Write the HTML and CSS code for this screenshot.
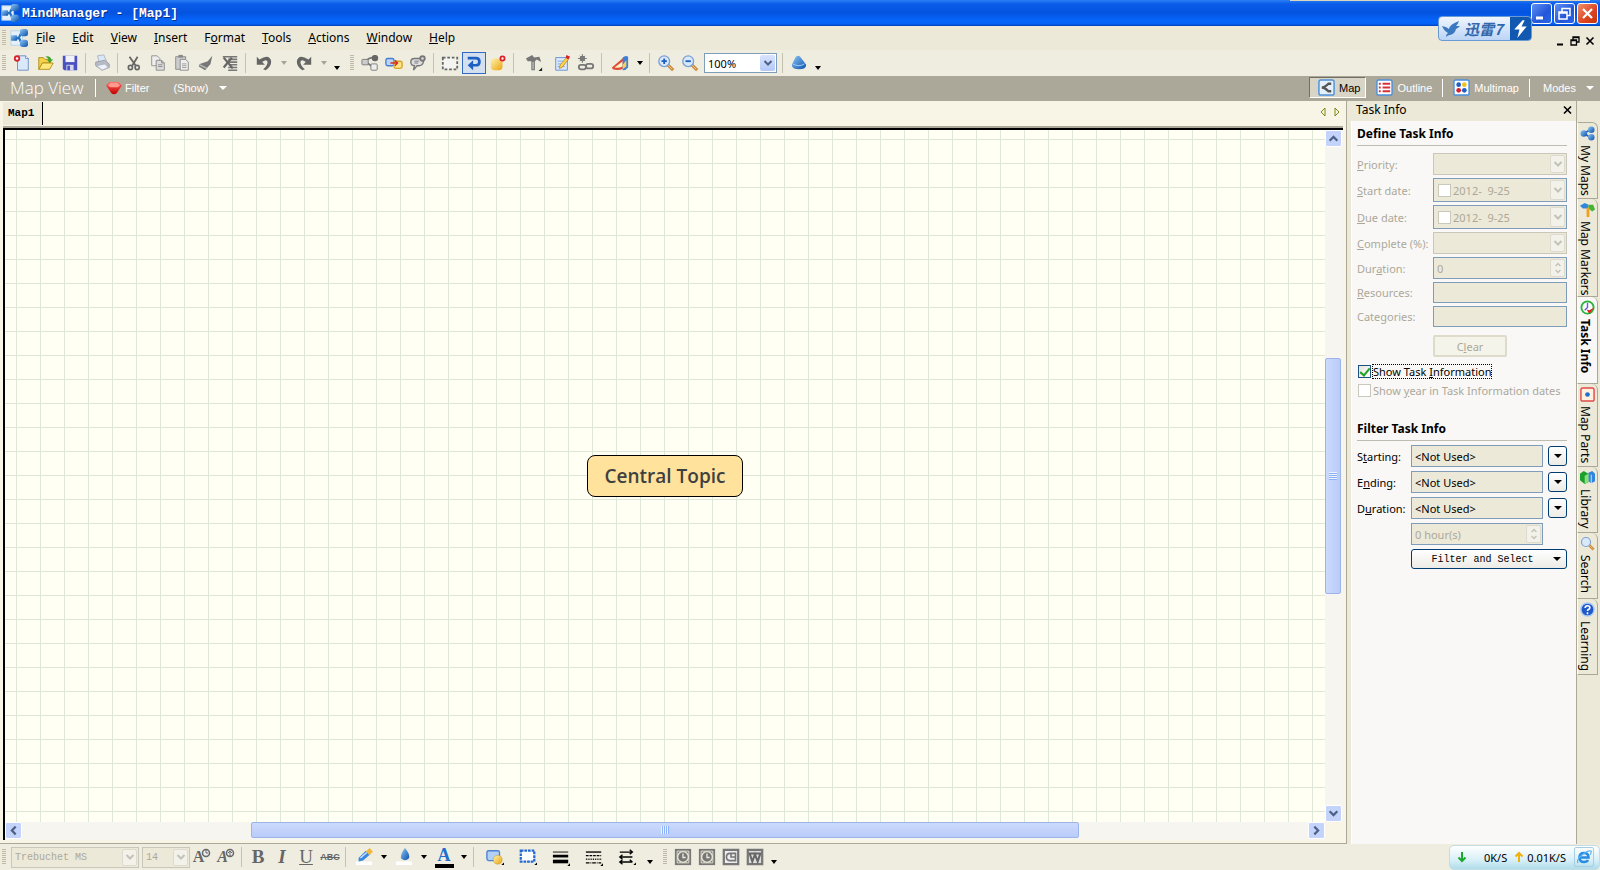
FILE: index.html
```html
<!DOCTYPE html>
<html lang="en">
<head>
  <meta charset="UTF-8">
  <meta name="viewport" content="width=device-width, initial-scale=1.0">
  <title>MindManager - [Map1]</title>
  <link rel="stylesheet" href="styles.css">
</head>
<body>
  <svg width="0" height="0" class="defs" aria-hidden="true">
    <defs>
      <linearGradient id="blue" x1="0" y1="0" x2="1" y2="1"><stop offset="0" stop-color="#8cc8f4"/><stop offset="1" stop-color="#0c4fae"/></linearGradient>
      <linearGradient id="gold" x1="0" y1="0" x2="1" y2="1"><stop offset="0" stop-color="#fff3b0"/><stop offset="1" stop-color="#e8a40c"/></linearGradient>
      <linearGradient id="ruby" x1="0" y1="0" x2="0" y2="1"><stop offset="0" stop-color="#ff6a60"/><stop offset="1" stop-color="#c40000"/></linearGradient>
    </defs>
    <symbol id="logo" viewBox="0 0 20 20">
      <rect x="1" y="2" width="13" height="16" fill="#e4f1fb" stroke="#b4d3ea"/>
      <path d="M5 10h4c2 0 2-6 5-6M9 10c3 0 2 6 5 6" fill="none" stroke="#2471c0" stroke-width="2.500"/>
      <rect x="1" y="7" width="7" height="6" rx="1" fill="url(#blue)"/>
      <rect x="11" y="0" width="9" height="8" rx="3" fill="url(#blue)"/>
      <rect x="11" y="12" width="9" height="8" rx="3" fill="url(#blue)"/>
    </symbol>
    <symbol id="chev" viewBox="0 0 10 10"><path d="M1.500 3 5 6.500 8.500 3" fill="none" stroke="currentColor" stroke-width="2"/></symbol>
    <symbol id="clock" viewBox="0 0 20 20">
      <rect x="1" y="1" width="18" height="18" fill="#777"/><path d="M3.500 3.500h13v13h-13z" fill="none" stroke="#ece9d8"/>
      <circle cx="10" cy="10" r="6" fill="#777" stroke="#ece9d8" stroke-width="1.500"/><path d="M10 6v4.500h3" fill="none" stroke="#ece9d8" stroke-width="1.500"/>
    </symbol>
    <symbol id="glass" viewBox="0 0 20 20">
      <path d="M12 12l6 6" stroke="#c98a3a" stroke-width="3.500"/><path d="M12 12l5 5" stroke="#f3c98a" stroke-width="1"/>
      <circle cx="8" cy="8" r="6" fill="#d8e9fb" stroke="#7d9fd0" stroke-width="1.500"/>
    </symbol>
  </svg>

  <header class="titlebar">
    <svg class="icon"><use href="#logo"/></svg>
    <h1>MindManager - [Map1]</h1>
    <div class="window-buttons">
      <button aria-label="Minimize"><svg viewBox="0 0 19 19"><path d="M4 14h7" stroke="#fff" stroke-width="3"/></svg></button>
      <button aria-label="Restore"><svg viewBox="0 0 19 19"><path d="M7 8V4.500h8v7h-3M7 4.500h8" fill="none" stroke="#fff" stroke-width="1.500"/><path d="M4 8h8v7H4zM4 9h8" fill="none" stroke="#fff" stroke-width="1.500"/></svg></button>
      <button class="close" aria-label="Close"><svg viewBox="0 0 19 19"><path d="M5 5l9 9M14 5l-9 9" stroke="#fff" stroke-width="2.200"/></svg></button>
    </div>
    <div class="badge">
      <svg viewBox="0 0 20 20" class="bird"><path d="M1 7q5 1 7 3 1-5 10-8-1 3-3 5 2 0 4 0-2 2-4 3-1 5-6 6-2 0-4 2 0-3 2-4-4-2-6-7z" fill="#3b79bf"/></svg>
      <span>迅雷7</span>
      <svg viewBox="0 0 20 24" class="bolt"><path d="M12 4 4 13h5l-2 8 9-11h-5l3-6z" fill="#fff"/></svg>
    </div>
  </header>

  <nav class="menubar">
    <span class="grip"></span>
    <svg class="icon"><use href="#logo"/></svg>
    <a href="#file"><u>F</u>ile</a>
    <a href="#edit"><u>E</u>dit</a>
    <a href="#view"><u>V</u>iew</a>
    <a href="#insert"><u>I</u>nsert</a>
    <a href="#format">F<u>o</u>rmat</a>
    <a href="#tools"><u>T</u>ools</a>
    <a href="#actions"><u>A</u>ctions</a>
    <a href="#window"><u>W</u>indow</a>
    <a href="#help"><u>H</u>elp</a>
    <div class="doc-buttons">
      <button aria-label="Minimize map"><svg viewBox="0 0 12 12"><path d="M3 9.500h6" stroke="#000" stroke-width="2"/></svg></button>
      <button aria-label="Restore map"><svg viewBox="0 0 12 12"><path d="M4 5V2h6v5H8M4 2.500h6M2 5h5.500v5H2zM2 5.500h6" fill="none" stroke="#000" stroke-width="1.300"/></svg></button>
      <button aria-label="Close map"><svg viewBox="0 0 12 12"><path d="M2.500 2.500l7 7M9.500 2.500l-7 7" stroke="#000" stroke-width="1.600"/></svg></button>
    </div>
  </nav>

  <div class="toolbar">
    <span class="grip"></span>
    <button class="tool" aria-label="New"><svg viewBox="0 0 20 20"><path d="M5 2h9l3 3v13H5z" fill="#d9e8fb" stroke="#6a8cc4"/><path d="M14 2v3h3" fill="#fff" stroke="#6a8cc4"/><circle cx="4.500" cy="5" r="2.500" fill="#fff" stroke="#d8202a" stroke-width="2"/></svg></button>
    <button class="tool" aria-label="Open"><svg viewBox="0 0 20 20"><path d="M2 4h5l2 2h6v4H6l-4 7z" fill="#f3d24a" stroke="#b08a14"/><path d="M6 10h12l-4 7H2z" fill="#ffe97a" stroke="#b08a14"/><path d="M9 3q5-2 7 3h2l-4 4-3-4h2q-1-2-4-3z" fill="#3fa52c"/></svg></button>
    <button class="tool" aria-label="Save"><svg viewBox="0 0 20 20"><path d="M2 2h16v16H3.500L2 16.500z" fill="#4a52c0"/><path d="M5 2h10v7H5z" fill="#f0f2fb"/><path d="M6 12h8v6H6z" fill="#d3d8f0"/><path d="M7 13h3v5H7z" fill="#4a52c0"/></svg></button>
    <span class="sep"></span>
    <button class="tool" aria-label="Print"><svg viewBox="0 0 20 20"><path d="M5 2l7-1 3 7-8 2z" fill="#d9e7f8" stroke="#a9b4c6"/><path d="M3 9l10-2 5 4v4l-8 3-7-5z" fill="#b8bac4" stroke="#9a9ca6"/><path d="M4 13l9-2 4 4-7 3z" fill="#eef2f8" stroke="#a9b4c6"/></svg></button>
    <span class="sep"></span>
    <button class="tool" aria-label="Cut"><svg viewBox="0 0 20 20"><path d="M5 3l7 10M14 3L8 13" stroke="#666" stroke-width="2"/><circle cx="6" cy="15" r="2.300" fill="none" stroke="#666" stroke-width="1.800"/><circle cx="13.500" cy="15" r="2.300" fill="none" stroke="#666" stroke-width="1.800"/></svg></button>
    <button class="tool" aria-label="Copy"><svg viewBox="0 0 20 20"><path d="M3 2h6l3 3v8H3z" fill="#eee" stroke="#909090"/><path d="M8 7h6l3 3v8H8z" fill="#ddd" stroke="#888"/><path d="M14 7v3h3M10 12h5M10 14h5" fill="none" stroke="#888"/></svg></button>
    <button class="tool" aria-label="Paste"><svg viewBox="0 0 20 20"><path d="M3 3h11v14H3z" fill="#ccc" stroke="#888"/><path d="M6 1h5v3H6z" fill="#888"/><path d="M8 6h6l3 3v9H8z" fill="#eee" stroke="#888"/><path d="M10 11h5M10 13h5M10 15h5" stroke="#999"/></svg></button>
    <button class="tool" aria-label="Format painter"><svg viewBox="0 0 20 20"><path d="M17 2l-5 6-9 3-1 3 7 4 6-7 2-9z" fill="#777"/><path d="M3 12l8 4" stroke="#bbb" stroke-width="1.500"/></svg></button>
    <button class="tool" aria-label="Clear format"><svg viewBox="0 0 20 20"><path d="M2 3h16M8 6h10M8 9h10M9 12h9M8 15h10M8 18h10" stroke="#777" stroke-width="1.800"/><path d="M3 4l10 12M12 4L3 15" stroke="#666" stroke-width="2.500"/></svg></button>
    <span class="sep"></span>
    <button class="tool wide" aria-label="Undo"><svg viewBox="0 0 20 20"><path d="M2 3v9h9L8 9q5-4 6 0 0 4-5 8l3 1q6-4 6-10Q16-1 5 6z" fill="#666"/></svg></button>
    <button class="drop grey" aria-label="Undo list"><i></i></button>
    <button class="tool wide" aria-label="Redo"><svg viewBox="0 0 20 20"><path d="M18 3v9h-9l3-3Q7 5 6 9q0 4 5 8l-3 1Q2 14 2 8 4-1 15 6z" fill="#666"/></svg></button>
    <button class="drop grey" aria-label="Redo list"><i></i></button>
    <button class="drop low" aria-label="Toolbar options"><i></i></button>
    <span class="grip second"></span>
    <button class="tool" aria-label="Insert topic"><svg viewBox="0 0 20 20"><path d="M6 8q2-4 8-4M7 10l7 5" fill="none" stroke="#777" stroke-width="2"/><rect x="1" y="6" width="7" height="6" rx="1" fill="#ccc" stroke="#777"/><rect x="12" y="1" width="7" height="7" rx="3" fill="#666"/><rect x="11" y="11" width="7" height="7" rx="1" fill="#eee" stroke="#777"/></svg></button>
    <button class="tool" aria-label="Insert relationship"><svg viewBox="0 0 20 20"><rect x="1" y="5" width="9" height="8" rx="2" fill="#b8d6fa" stroke="#4a7cd0" stroke-width="1.500"/><rect x="10" y="8" width="9" height="8" rx="2" fill="#ffe48a" stroke="#d8a424" stroke-width="1.500"/><path d="M6 10h8M11 7l3 3-3 3" fill="none" stroke="#d82c20" stroke-width="1.500"/></svg></button>
    <button class="tool" aria-label="Insert callout"><svg viewBox="0 0 20 20"><path d="M2 9q0-4 4-4h6q5 0 4 4-1 4-5 4H9l-4 5 1-5q-4 0-4-4z" fill="#ddd" stroke="#777" stroke-width="1.500"/><circle cx="15" cy="5" r="2.500" fill="#ddd" stroke="#777" stroke-width="2"/><path d="M6 8h5M6 10h4" stroke="#777"/></svg></button>
    <span class="sep"></span>
    <button class="tool" aria-label="Boundary"><svg viewBox="0 0 20 20"><path d="M2 4h16v13H2z" fill="#f4f4f0" stroke="#666" stroke-width="2" stroke-dasharray="3 2"/></svg></button>
    <button class="tool active" aria-label="Structure"><svg viewBox="0 0 20 20"><path d="M3 4.500h9q4 0 4 4t-4 4H8" fill="none" stroke="#1e5fc4" stroke-width="3"/><path d="M9 7v11l-6-5.500z" fill="#1e5fc4"/></svg></button>
    <button class="tool" aria-label="Add marker"><svg viewBox="0 0 20 20"><rect x="2" y="5" width="13" height="13" rx="4" fill="url(#gold)"/><circle cx="15" cy="5" r="2.300" fill="#fff" stroke="#d8202a" stroke-width="2"/></svg></button>
    <span class="sep"></span>
    <button class="tool wider" aria-label="Markers"><svg viewBox="0 0 20 20"><path d="M1 5l7-4 2 3 6-1 2 6-5-3-2 2v10H7V8L3 8z" fill="#777"/><path d="M8 9h2v8H8z" fill="#aaa"/><path d="M19 15v4h-4z" fill="#222"/></svg></button>
    <button class="tool" aria-label="Notes"><svg viewBox="0 0 20 20"><path d="M3 4h13v14H3z" fill="#dce9fb" stroke="#5b8fd8"/><path d="M5 8h8M5 11h6M5 14h8" stroke="#7ba6e0"/><path d="M15 4l2 2-7 9-3 1 1-4z" fill="#ffd24a" stroke="#a77718" stroke-width=".700"/><path d="M15 1l4 2-2 3-3-2z" fill="#d8202a"/></svg></button>
    <button class="tool" aria-label="Hyperlink"><svg viewBox="0 0 20 20"><circle cx="6" cy="5" r="2" fill="none" stroke="#777" stroke-width="2"/><path d="M6 0v10M1 5h10M3 2l6 6M9 2L3 8" stroke="#777"/><rect x="2" y="12" width="8" height="5" rx="2.500" fill="none" stroke="#777" stroke-width="2"/><rect x="10" y="11" width="8" height="5" rx="2.500" fill="none" stroke="#777" stroke-width="2"/></svg></button>
    <span class="sep"></span>
    <button class="tool wide" aria-label="Review"><svg viewBox="0 0 20 20"><path d="M1 15 14 4v12q-6 3-12 1z" fill="#e04a36"/><path d="M4 15l9-7v6q-5 2-9 1z" fill="#fff4c4"/><path d="M13 4q3-3 6-1v12q-2 3-6 3z" fill="#3f7fd4"/><path d="M13 12l4-5v7l-4 3z" fill="#f5cf5a"/></svg></button>
    <button class="drop" aria-label="Review options"><i></i></button>
    <span class="sep"></span>
    <button class="tool" aria-label="Zoom in"><svg viewBox="0 0 20 20"><use href="#glass"/><path d="M5 8h6M8 5v6" stroke="#1e5fc4" stroke-width="2"/></svg></button>
    <button class="tool" aria-label="Zoom out"><svg viewBox="0 0 20 20"><use href="#glass"/><path d="M5 8h6" stroke="#1e5fc4" stroke-width="2"/></svg></button>
    <span class="combo zoom">
      <select aria-label="Zoom level"><option>100%</option></select>
      <span class="arrow"><svg><use href="#chev"/></svg></span>
    </span>
    <span class="sep"></span>
    <button class="tool" aria-label="Presentation"><svg viewBox="0 0 20 20"><path d="M9 2q2 0 3 2l6 8q0 5-8 5t-8-5l4-8q1-2 3-2z" fill="url(#blue)"/><path d="M3 11q7 4 13 0" fill="none" stroke="#a8d4fa"/></svg></button>
    <button class="drop low" aria-label="Toolbar options"><i></i></button>
  </div>

  <div class="viewbar">
    <h2>Map View</h2>
    <span class="bar"></span>
    <button class="filter"><svg viewBox="0 0 20 16"><path d="M1 5l4-4h10l4 4-6 9q-3 2-6 0z" fill="url(#ruby)"/><path d="M3 5l3-3h8l3 3-3 2H6z" fill="#ff9a90"/></svg>Filter</button>
    <button class="show">(Show) <i></i></button>
    <div class="views">
      <button class="view current"><svg viewBox="0 0 18 18"><rect x="1" y="1" width="16" height="16" rx="2" fill="#e4f0fc" stroke="#4a90dc" stroke-width="1.500"/><path d="M14 5h-3q-4 4-7 4 3 0 7 4h3" fill="none" stroke="#555" stroke-width="2.500"/></svg>Map</button>
      <button class="view"><svg viewBox="0 0 18 18"><rect x="1" y="1" width="16" height="16" rx="2" fill="#fff" stroke="#4a90dc" stroke-width="1.500"/><path d="M3 5h2M3 9h2M3 13h2M7 5h8M7 9h8M7 13h8" stroke="#d83038" stroke-width="2"/></svg>Outline</button>
      <span class="bar"></span>
      <button class="view multi"><svg viewBox="0 0 18 18"><rect x="1" y="1" width="16" height="16" rx="2" fill="#fff" stroke="#4a90dc" stroke-width="1.500"/><circle cx="6" cy="6" r="2.500" fill="#1e5fc4"/><circle cx="12" cy="6" r="2.500" fill="#f0c020"/><circle cx="6" cy="12" r="2.500" fill="#d8202a"/><circle cx="12" cy="12" r="2.500" fill="#1e5fc4"/></svg>Multimap</button>
      <span class="bar"></span>
      <button class="view modes">Modes <i></i></button>
    </div>
  </div>

  <main class="workspace">
    <section class="document">
      <div class="tabs">
        <a class="tab" href="#map1">Map1</a>
        <div class="tab-nav">
          <button aria-label="Previous tab"><svg viewBox="0 0 8 10"><path d="M6 1v8L2 5z" fill="none" stroke="#7a8a10"/></svg></button>
          <button aria-label="Next tab"><svg viewBox="0 0 8 10"><path d="M2 1v8l4-4z" fill="none" stroke="#7a8a10"/></svg></button>
        </div>
      </div>
      <div class="map">
        <div class="canvas" id="map1"><div class="topic">Central Topic</div></div>
        <div class="scroll vertical">
          <button class="up" aria-label="Scroll up"><svg><use href="#chev"/></svg></button>
          <span class="before"></span><span class="thumb"></span><span class="after"></span>
          <button aria-label="Scroll down"><svg><use href="#chev"/></svg></button>
        </div>
        <div class="scroll horizontal">
          <button class="left" aria-label="Scroll left"><svg><use href="#chev"/></svg></button>
          <span class="before"></span><span class="thumb"></span><span class="after"></span>
          <button class="right" aria-label="Scroll right"><svg><use href="#chev"/></svg></button>
        </div>
      </div>
    </section>

    <aside class="panel">
      <div class="panel-head"><span>Task Info</span><button aria-label="Close panel"><svg viewBox="0 0 12 12"><path d="M3 2.500l7 7M10 2.500l-7 7" stroke="#000" stroke-width="1.600"/></svg></button></div>
      <form class="panel-body">
        <h3>Define Task Info</h3>
        <div class="define">
          <label for="priority"><u>P</u>riority:</label>
          <span class="combo off"><select id="priority" disabled><option></option></select><span class="arrow"><svg><use href="#chev"/></svg></span></span>
          <label for="start"><u>S</u>tart date:</label>
          <span class="combo off date"><input type="checkbox" aria-label="Use start date" disabled><input type="text" id="start" value="2012-  9-25" disabled><span class="arrow"><svg><use href="#chev"/></svg></span></span>
          <label for="due"><u>D</u>ue date:</label>
          <span class="combo off date"><input type="checkbox" aria-label="Use due date" disabled><input type="text" id="due" value="2012-  9-25" disabled><span class="arrow"><svg><use href="#chev"/></svg></span></span>
          <label for="complete"><u>C</u>omplete (%):</label>
          <span class="combo off"><select id="complete" disabled><option></option></select><span class="arrow"><svg><use href="#chev"/></svg></span></span>
          <label for="duration">Dur<u>a</u>tion:</label>
          <span class="combo off edged"><input type="text" id="duration" value="0" disabled><span class="arrow spin"><svg><use href="#chev"/></svg><svg><use href="#chev"/></svg></span></span>
          <label for="resources"><u>R</u>esources:</label>
          <input class="plain" type="text" id="resources" disabled>
          <label for="categories">Cate<u>g</u>ories:</label>
          <input class="plain" type="text" id="categories" disabled>
        </div>
        <button type="button" class="clear" disabled>C<u>l</u>ear</button>
        <label class="check"><input type="checkbox" checked><span class="focus">Show Task <u>I</u>nformation</span></label>
        <label class="check off"><input type="checkbox" disabled><span>Show <u>y</u>ear in Task Information dates</span></label>
        <h3 class="next">Filter Task Info</h3>
        <div class="filters">
          <label for="f-start">S<u>t</u>arting:</label>
          <input class="plain" type="text" id="f-start" value="&lt;Not Used&gt;" readonly>
          <button type="button" class="pick" aria-label="Choose starting"><i></i></button>
          <label for="f-end">E<u>n</u>ding:</label>
          <input class="plain" type="text" id="f-end" value="&lt;Not Used&gt;" readonly>
          <button type="button" class="pick" aria-label="Choose ending"><i></i></button>
          <label for="f-dur">D<u>u</u>ration:</label>
          <input class="plain" type="text" id="f-dur" value="&lt;Not Used&gt;" readonly>
          <button type="button" class="pick" aria-label="Choose duration"><i></i></button>
          <span class="combo off edged hours"><input type="text" aria-label="Hours" value="0 hour(s)" disabled><span class="arrow spin"><svg><use href="#chev"/></svg><svg><use href="#chev"/></svg></span></span>
          <button type="button" class="apply"><span>Filter and Select</span><i></i></button>
        </div>
      </form>
    </aside>

    <nav class="side-tabs">
      <a class="side maps" href="#my-maps"><svg viewBox="0 0 16 16"><path d="M4 8l7-4M4 8l7 4" stroke="#1e5fc4" stroke-width="2"/><circle cx="4" cy="8" r="3.500" fill="url(#blue)"/><circle cx="12" cy="4" r="3.500" fill="url(#blue)"/><circle cx="12" cy="12" r="3.500" fill="url(#blue)"/></svg><span>My Maps</span></a>
      <a class="side markers" href="#map-markers"><svg viewBox="0 0 16 16"><path d="M0 4l5-3 4 2v4L3 7z" fill="#2f86dc"/><path d="M9 3l5 0 2 5-3 2-4-3z" fill="#45b436"/><path d="M7 6h3v10H7z" fill="#f0a020"/></svg><span>Map Markers</span></a>
      <a class="side task current" href="#task-info"><svg viewBox="0 0 16 16"><circle cx="8" cy="8" r="6.500" fill="#fff" stroke="#2eb43a" stroke-width="2"/><path d="M8 3v5l-3 3" fill="none" stroke="#6a60d0" stroke-width="1.500"/><path d="M7 10l3 5 5-7-5 3z" fill="#e02020"/></svg><span>Task Info</span></a>
      <a class="side parts" href="#map-parts"><svg viewBox="0 0 16 16"><rect x="1" y="1" width="14" height="14" rx="2" fill="#fff0e0" stroke="#e04848" stroke-width="1.500"/><circle cx="8" cy="8" r="2.500" fill="#1e6fd0"/></svg><span>Map Parts</span></a>
      <a class="side library" href="#library"><svg viewBox="0 0 16 16"><path d="M0 4l4-3 5 3v9l-4 2-5-4z" fill="#1ca02c"/><path d="M9 3l4-2 3 3v8l-4 2-3-2z" fill="#2f86dc"/><path d="M5 6l4-2v9l-4 2z" fill="#8ade80"/><path d="M12 5v9" stroke="#cfe8ff"/></svg><span>Library</span></a>
      <a class="side search" href="#search"><svg viewBox="0 0 20 20"><use href="#glass"/></svg><span>Search</span></a>
      <a class="side learning" href="#learning"><svg viewBox="0 0 16 16"><circle cx="8" cy="8" r="7" fill="#2058c8" stroke="#a8c8f4" stroke-width="1.500"/><path d="M5.500 6.500q0-2.500 2.500-2.500t2.500 2q0 1.200-1.500 2-1 .500-1 1.500M8 11v2" fill="none" stroke="#fff" stroke-width="1.700"/></svg><span>Learning</span></a>
    </nav>
  </main>

  <footer class="toolbar format">
    <span class="grip"></span>
    <span class="combo off font"><select aria-label="Font" disabled><option>Trebuchet MS</option></select><span class="arrow"><svg><use href="#chev"/></svg></span></span>
    <span class="combo off size"><select aria-label="Font size" disabled><option>14</option></select><span class="arrow"><svg><use href="#chev"/></svg></span></span>
    <button class="tool glyph small" aria-label="Grow font">A<svg viewBox="0 0 10 10"><circle cx="5" cy="5" r="3.500" fill="#eee" stroke="#666" stroke-width="1.500"/><path d="M5 2v3h2" fill="none" stroke="#666"/></svg></button>
    <button class="tool glyph small italic" aria-label="Shrink font">A<svg viewBox="0 0 10 10"><circle cx="5" cy="5" r="3.500" fill="#eee" stroke="#666" stroke-width="1.500"/><path d="M5 8V4M3 5l2-2 2 2" fill="none" stroke="#666"/></svg></button>
    <span class="sep"></span>
    <button class="tool glyph" aria-label="Bold">B</button>
    <button class="tool glyph italic" aria-label="Italic">I</button>
    <button class="tool glyph under" aria-label="Underline">U</button>
    <button class="tool glyph strike" aria-label="Strikethrough">ABC</button>
    <span class="sep"></span>
    <button class="tool wide" aria-label="Line color"><svg viewBox="0 0 20 20"><path d="M1 15h18v4H1z" fill="#fff"/><path d="M4 11l8-8 5 4-8 7-5 1z" fill="#3a86e0"/><path d="M12 4l4-4 4 4-4 4z" fill="#f0b840"/><path d="M6 11l7-6" stroke="#cfe6ff" stroke-width="1.500"/></svg></button>
    <button class="drop" aria-label="Line colors"><i></i></button>
    <button class="tool wide" aria-label="Fill color"><svg viewBox="0 0 20 20"><path d="M1 15h18v4H1z" fill="#fff"/><path d="M11 0q7 8 4 12-4 3-8 0-2-4 4-12z" fill="url(#blue)"/></svg></button>
    <button class="drop" aria-label="Fill colors"><i></i></button>
    <button class="tool wide glyph fontcolor" aria-label="Font color">A</button>
    <button class="drop" aria-label="Font colors"><i></i></button>
    <span class="sep"></span>
    <button class="tool wider" aria-label="Topic shape"><svg viewBox="0 0 20 20"><rect x="1" y="3" width="14" height="11" rx="2" fill="#b4d0f6" stroke="#4a82d0" stroke-width="1.500"/><circle cx="13" cy="13" r="5" fill="url(#gold)" stroke="#b88a20" stroke-width=".500"/><path d="M20 16v3h-3z"/></svg></button>
    <button class="tool wider" aria-label="Boundary shape"><svg viewBox="0 0 20 20"><path d="M2 3h15v12H2z" fill="#fff" stroke="#2468d0" stroke-width="2.500" stroke-dasharray="3 1"/><path d="M20 16v3h-3z"/></svg></button>
    <button class="tool wider" aria-label="Line weight"><svg viewBox="0 0 20 20"><path d="M1 4.500h17" stroke="#000"/><path d="M1 9h17" stroke="#000" stroke-width="3"/><path d="M1 15h17" stroke="#000" stroke-width="4"/><path d="M20 17v3h-3z"/></svg></button>
    <button class="tool wider" aria-label="Line pattern"><svg viewBox="0 0 20 20"><path d="M1 4.500h17" stroke="#000" stroke-width="1.500"/><path d="M1 8.500h17" stroke="#000" stroke-width="1.500" stroke-dasharray="3 1"/><path d="M1 12.500h17" stroke="#000" stroke-width="1.500" stroke-dasharray="1 1"/><path d="M1 16.500h17" stroke="#000" stroke-width="1.500" stroke-dasharray="4 1 1 1"/><path d="M20 17v3h-3z"/></svg></button>
    <button class="tool wider" aria-label="Arrow style"><svg viewBox="0 0 20 20"><path d="M2 4.500h14M2 10h14M2 15.500h14M13 2l3 2.500L13 7M5 7.500L2 10l3 2.500M5 13l-3 2.500L5 18M13 13l3 2.500" fill="none" stroke="#000" stroke-width="1.500"/><path d="M20 16v3h-3z"/></svg></button>
    <button class="drop low" aria-label="Toolbar options"><i></i></button>
    <span class="grip second"></span>
    <button class="tool" aria-label="Export task"><svg><use href="#clock"/></svg></button>
    <button class="tool" aria-label="Sync task"><svg><use href="#clock"/></svg></button>
    <button class="tool" aria-label="Export presentation"><svg viewBox="0 0 20 20"><path d="M2 2h16v16H2z" fill="#eee" stroke="#777" stroke-width="2.500"/><path d="M15 6H9q-4 0-4 4t4 4h6V6zM10 6v4h5" fill="none" stroke="#777" stroke-width="1.800"/></svg></button>
    <button class="tool" aria-label="Export document"><svg viewBox="0 0 20 20"><path d="M2 2h16v16H2z" fill="#ddd" stroke="#777" stroke-width="2.500"/><path d="M3 6h14M4 6l3 9 3-8 3 8 3-9" fill="none" stroke="#666" stroke-width="2.200"/></svg></button>
    <button class="drop low" aria-label="Toolbar options"><i></i></button>
    <div class="net">
      <svg viewBox="0 0 10 12"><path d="M5 1v9M1.500 6.500L5 10l3.500-3.500" fill="none" stroke="#1ca82c" stroke-width="2"/></svg>
      <span class="rate">0K/S</span>
      <svg viewBox="0 0 10 12"><path d="M5 11V2M1.500 5.500L5 2l3.500 3.500" fill="none" stroke="#f0b010" stroke-width="2"/></svg>
      <span>0.01K/S</span>
      <button aria-label="Browser"><svg viewBox="0 0 16 16"><path d="M3.500 8.500h9q0-4.500-4.500-4.500T3.500 8.500t4.500 4.500q3 0 4-2" fill="none" stroke="#2a8ce0" stroke-width="2.500"/><path d="M2 14q-2-3 4-8t9-4q1 1-1 4" fill="none" stroke="#5ab4f0" stroke-width="1.200"/></svg></button>
    </div>
  </footer>
</body>
</html>
```

FILE: styles.css
```css
* {
  box-sizing: border-box;
}
body {
  margin: 0;
  height: 100vh;
  display: flex;
  flex-direction: column;
  overflow: hidden;
  background-color: #ece9d8;
  font-family: "Noto Sans", "Open Sans", sans-serif;
  font-size: 11px;
  color: #000;
}
h1, h2, h3 {
  margin: 0;
}
button, input, select {
  font: inherit;
  color: inherit;
  margin: 0;
  padding: 0;
  border: none;
  background: none;
  border-radius: 0;
}
button {
  display: flex;
  align-items: center;
  justify-content: center;
}
a {
  color: inherit;
  text-decoration: none;
}
svg {
  flex: none;
}
.defs {
  position: absolute;
}
/* small drop-down triangle */
i {
  border: 3px solid transparent;
  border-top: 4px solid currentColor;
  border-bottom: none;
}
.icon {
  width: 18px;
  height: 18px;
}

/* title bar */
.titlebar {
  position: relative;
  flex: none;
  height: 26px;
  display: flex;
  align-items: center;
  padding: 0 2px 0 1px;
  background: linear-gradient(#2a80f4, #0a5ce8 15%, #0453e0 50%, #0566fc 80%, #0462f4 92%, #0340b8);
}
.titlebar h1 {
  margin-left: 3px;
  font: bold 13px "Liberation Mono", monospace;
  color: #fff;
  text-shadow: 1px 1px #0b2f84;
}
.titlebar::after {
  content: "";
  position: absolute;
  top: 0;
  right: 10px;
  width: 300px;
  height: 1px;
  background-color: #d8d4c0;
}
.window-buttons {
  margin-left: auto;
  display: flex;
  gap: 2px;
}
.window-buttons button {
  width: 21px;
  height: 21px;
  border: 1px solid #fff;
  border-radius: 3px;
  background: linear-gradient(135deg, #5e90f4, #2356d8 60%, #2a66e8);
}
.window-buttons svg {
  width: 19px;
  height: 19px;
}
.window-buttons .close {
  background: linear-gradient(135deg, #f0906c, #dc4420 60%, #c83408);
}
.badge {
  position: absolute;
  top: 16px;
  right: 68px;
  z-index: 2;
  display: flex;
  align-items: center;
  width: 94px;
  height: 25px;
  border: 1px solid #6a9ad4;
  border-radius: 4px;
  overflow: hidden;
  background: linear-gradient(#f0f6ff, #bcd4f6);
  font: italic bold 15px "Noto Sans CJK SC", sans-serif;
  color: #3268ac;
}
.bird {
  width: 20px;
  height: 20px;
  margin: 0 3px 0 2px;
}
.badge span {
  flex: 1;
  white-space: nowrap;
}
.bolt {
  width: 21px;
  height: 25px;
  background-color: #1058b0;
}

/* menu */
.menubar {
  flex: none;
  display: flex;
  align-items: center;
  height: 24px;
  padding: 0 2px 1px;
  font-size: 12px;
}
.menubar .icon {
  margin: 0 8px 0 0;
}
.menubar a {
  margin-right: 17px;
}
.doc-buttons {
  display: flex;
  gap: 3px;
  margin: 6px 2px 0 auto;
}
.doc-buttons svg,
.panel-head svg {
  width: 12px;
  height: 12px;
}

/* toolbars */
.toolbar {
  flex: none;
  display: flex;
  align-items: center;
  height: 26px;
  padding-left: 2px;
  background-color: #efeddf;
}
.grip {
  width: 4px;
  height: 16px;
  margin-right: 4px;
  background: repeating-linear-gradient(#bdb9a6 0 1px, #efeddf 1px 2px);
}
.grip.second {
  margin: 0 4px 0 6px;
}
.tool {
  width: 24px;
  height: 22px;
}
.tool.wide {
  width: 28px;
}
.tool.wider {
  width: 32px;
}
.tool svg {
  width: 18px;
  height: 18px;
}
.tool.active {
  border: 1px solid #316ac5;
  background-color: #d4e0f0;
}
.sep {
  width: 1px;
  height: 20px;
  margin: 0 4px 0 3px;
  background-color: #c5c2b0;
}
.drop {
  width: 12px;
  height: 22px;
}
.drop.grey {
  color: #a8a595;
}
.drop.low {
  width: 14px;
  padding-top: 10px;
}
.combo {
  display: flex;
  height: 22px;
  padding: 1px;
  border: 1px solid #7f9db9;
  background-color: #fff;
}
.combo select,
.combo input[type="text"] {
  appearance: none;
  flex: 1;
  min-width: 0;
  width: 0;
  padding-left: 2px;
  opacity: 1;
}
.arrow {
  display: flex;
  flex-direction: column;
  align-items: center;
  justify-content: center;
  width: 15px;
  border-radius: 2px;
  background: linear-gradient(#d8e4fe, #b4c8f8);
  color: #4d6185;
}
.arrow svg {
  width: 10px;
  height: 10px;
}
.combo.zoom {
  width: 73px;
  height: 20px;
  margin: 0 2px;
}
.combo.off {
  border-color: #c9c7ba;
  background-color: #ece9d8;
  color: #aca899;
}
.combo.off .arrow {
  border: 1px solid #dddbcf;
  background: #f3f2ea;
  color: #c4c2b6;
}

/* view bar */
.viewbar {
  flex: none;
  display: flex;
  align-items: center;
  height: 25px;
  padding: 0 4px 2px 10px;
  background-color: #aca899;
  font-family: "Liberation Sans", sans-serif;
  color: #fff;
}
.viewbar h2 {
  width: 85px;
  font: 300 17px "Open Sans", sans-serif;
}
.bar {
  width: 1px;
  height: 18px;
  background-color: #fff;
}
.viewbar i {
  border-width: 4px 4px 0;
}
.filter {
  margin-left: 9px;
}
.filter svg {
  width: 18px;
  height: 14px;
  margin-right: 2px;
}
.show {
  gap: 11px;
  margin-left: 24px;
}
.views {
  display: flex;
  align-items: center;
  margin-left: auto;
}
.view {
  gap: 4px;
  height: 21px;
  padding: 0 10px;
}
.view svg {
  width: 17px;
  height: 17px;
}
.view.current {
  padding: 0 5px 0 8px;
  border: 1px solid #fff;
  border-top-color: #716f64;
  border-left-color: #716f64;
  background-color: #d8d5c6;
  color: #000;
}
.view.modes {
  gap: 10px;
  padding: 0 2px 0 13px;
}

/* workspace */
.workspace {
  flex: 1;
  min-height: 0;
  display: flex;
}
.document {
  flex: 1;
  min-width: 0;
  display: flex;
  flex-direction: column;
  padding: 0 3px 3px 3px;
  border-right: 1px solid #aca899;
  border-bottom: 1px solid #aca899;
  background-color: #f8f5e6;
}
.tabs {
  flex: none;
  display: flex;
  align-items: center;
  height: 27px;
  border-bottom: 2px solid #aca899;
}
.tab {
  height: 23px;
  padding: 0 8px 0 5px;
  border-right: 1px solid #000;
  background-color: #ece9d8;
  font: bold 11px/23px "Liberation Mono", monospace;
}
.tab-nav {
  display: flex;
  gap: 6px;
  margin: 0 2px 3px auto;
}
.tab-nav svg {
  width: 8px;
  height: 10px;
}
.map {
  flex: 1;
  min-height: 0;
  display: grid;
  grid-template: 1fr 18px / 1fr 18px;
  border-top: 2px solid #000;
  border-left: 2px solid #000;
}
.canvas {
  display: flex;
  align-items: center;
  justify-content: center;
  background-color: #fffff3;
  background-image: linear-gradient(#dfe8d8 1px, transparent 1px), linear-gradient(90deg, #dfe8d8 1px, transparent 1px);
  background-size: 24px 24px;
  background-position: 11px 9px;
}
.topic {
  padding: 0 17px;
  border: 1px solid #000;
  border-radius: 8px;
  background-color: #ffe29c;
  font: 600 19px/40px "Open Sans", sans-serif;
  color: #404040;
}
.scroll {
  display: flex;
  background-color: #f6f5f0;
}
.vertical {
  flex-direction: column;
}
.scroll button {
  flex: none;
  width: 17px;
  height: 17px;
  border: 1px solid #fff;
  border-radius: 2px;
  background: #c3d3fb;
  color: #4d6185;
}
.scroll button svg {
  width: 11px;
  height: 11px;
}
.up svg {
  transform: rotate(180deg);
}
.left svg {
  transform: rotate(90deg);
}
.right svg {
  transform: rotate(-90deg);
}
.thumb {
  display: flex;
  align-items: center;
  justify-content: center;
  border: 1px solid #9db4ea;
  border-radius: 2px;
  background: linear-gradient(90deg, #cbdafd, #b9cbf8);
}
.thumb::after {
  content: "";
  width: 8px;
  height: 8px;
  background: repeating-linear-gradient(#eef4fe 0 1px, #8cb0f8 1px 2px);
}
.horizontal .thumb {
  margin-bottom: 2px;
  background: linear-gradient(#cbdafd, #b9cbf8);
}
.horizontal .thumb::after {
  background: repeating-linear-gradient(90deg, #eef4fe 0 1px, #8cb0f8 1px 2px);
}
.vertical .thumb {
  flex: 236;
  margin-right: 2px;
}
.vertical .before,
.vertical .after {
  flex: 212;
}
.horizontal .thumb {
  flex: 828;
}
.horizontal .before,
.horizontal .after {
  flex: 229;
}

/* task panel */
.panel {
  width: 226px;
  margin-left: 4px;
  display: flex;
  flex-direction: column;
  border-right: 1px solid #aca899;
}
.panel-head {
  display: flex;
  align-items: center;
  justify-content: space-between;
  height: 20px;
  padding: 0 3px 3px 5px;
  font-size: 12px;
}
.panel-body {
  flex: 1;
  padding: 3px 9px 0 5px;
  background-color: #f9f8f7;
  border-left: 1px solid #fff;
}
.panel h3 {
  height: 22px;
  border-bottom: 1px solid #bfbdb2;
  font: bold 12px/20px "Noto Sans", sans-serif;
}
.panel h3.next {
  margin-top: 19px;
}
.define {
  display: grid;
  grid-template-columns: 76px 1fr;
  align-items: center;
  row-gap: 3px;
  padding-top: 7px;
  color: #aca899;
}
.define label {
  white-space: nowrap;
}
.define .date {
  height: 24px;
}
.define .date,
.combo.edged {
  border-color: #7f9db9;
}
.combo.date {
  align-items: center;
}
.date .arrow {
  align-self: stretch;
}
input[type="checkbox"] {
  appearance: none;
  flex: none;
  width: 13px;
  height: 13px;
  border: 1px solid #cac8bb;
  background-color: #fff;
}
.date input[type="checkbox"] {
  margin-left: 3px;
}
.spin svg {
  width: 8px;
  height: 7px;
}
.spin svg:first-child {
  transform: rotate(180deg);
}
.plain {
  width: 100%;
  min-width: 0;
  height: 21px;
  padding-left: 3px;
  border: 1px solid #7f9db9;
  background-color: #ece9d8;
}
.clear {
  width: 74px;
  height: 22px;
  margin: 8px 0 5px 76px;
  border: 2px solid #dedbca;
  border-radius: 2px;
  background-color: #f5f4ea;
  color: #aca899;
}
.check {
  display: flex;
  align-items: center;
  gap: 2px;
  height: 19px;
  padding-left: 1px;
  white-space: nowrap;
}
.check.off {
  color: #aca899;
}
.focus {
  line-height: 13px;
  outline: 1px dotted #000;
}
.check input:checked {
  border-color: #1c5180;
  background-image: linear-gradient(135deg, #e4e4dc, #fff);
}
.check input:checked::after {
  content: "";
  display: block;
  width: 4px;
  height: 8px;
  margin: 0 auto;
  border: solid #21a121;
  border-width: 0 2px 2px 0;
  transform: rotate(40deg);
}
.filters {
  display: grid;
  grid-template-columns: 54px 1fr 19px;
  align-items: center;
  row-gap: 4px;
  padding-top: 4px;
}
.filters label {
  white-space: nowrap;
}
.filters .plain,
.hours {
  width: auto;
  height: 22px;
  margin-right: 5px;
}
.pick,
.apply {
  height: 20px;
  border: 1px solid #003c74;
  border-radius: 3px;
  background: linear-gradient(#fff, #ecebe5);
}
.pick i,
.apply i {
  border-width: 4px 4px 0;
}
.hours {
  grid-column: 2;
}
.apply {
  grid-column: 2 / 4;
  padding-right: 5px;
  font: 10px "Liberation Mono", monospace;
}
.apply span {
  flex: 1;
}

/* vertical tabs */
.side-tabs {
  width: 23px;
  padding-top: 21px;
}
.side {
  display: flex;
  flex-direction: column;
  align-items: center;
  gap: 4px;
  width: 21px;
  padding-top: 3px;
  border: 1px solid #aca899;
  border-top: none;
  border-left-color: #fff;
  border-radius: 0 6px 0 0;
  background-color: #ece9d8;
  font-size: 12px;
}
.side:first-child {
  border-top: 1px solid #aca899;
}
.side svg {
  width: 15px;
  height: 15px;
}
.side span {
  margin-right: 5px;
  writing-mode: vertical-rl;
  line-height: 16px;
  white-space: nowrap;
}
.side.current {
  background-color: #f9f8f7;
  font-weight: bold;
}
.maps {
  height: 77px;
}
.markers {
  height: 98px;
}
.task {
  height: 87px;
}
.parts {
  height: 83px;
}
.library,
.search {
  height: 66px;
}
.learning {
  height: 76px;
}

/* format bar */
.format .combo {
  height: 21px;
  font: 10px "Liberation Mono", monospace;
}
.format .font {
  width: 128px;
  margin: 0 3px 0 1px;
}
.format .size {
  width: 48px;
}
.format .wider {
  width: 33px;
}
.glyph {
  font: bold 19px "Liberation Serif", serif;
  color: #666;
}
.glyph.italic {
  font-style: italic;
}
.glyph.under {
  font-weight: normal;
  text-decoration: underline;
}
.glyph.strike {
  font: bold 9px "Liberation Sans", sans-serif;
  text-decoration: line-through;
}
.glyph.small {
  font-size: 16px;
}
.glyph.small svg {
  width: 10px;
  height: 10px;
  margin: 0 0 8px -3px;
}
.glyph.fontcolor {
  color: #1e6fd0;
  font-size: 18px;
  line-height: 16px;
  background: linear-gradient(#000, #000) center bottom / 19px 4px no-repeat;
  padding-bottom: 4px;
}
.net {
  display: flex;
  align-items: center;
  height: 25px;
  margin-left: auto;
  padding: 0 5px 0 7px;
  border: 1px solid #c4dce4;
  border-radius: 5px;
  background: linear-gradient(#fff, #d8f0f8 60%, #b0dcea);
}
.net svg {
  width: 10px;
  height: 12px;
}
.rate {
  margin: 0 7px 0 17px;
}
.net svg + span:not(.rate) {
  margin-left: 3px;
}
.net button {
  width: 20px;
  height: 20px;
  margin-left: 8px;
  border: 1px solid #a8cce0;
  border-radius: 2px;
}
.net button svg {
  width: 16px;
  height: 16px;
}
```
